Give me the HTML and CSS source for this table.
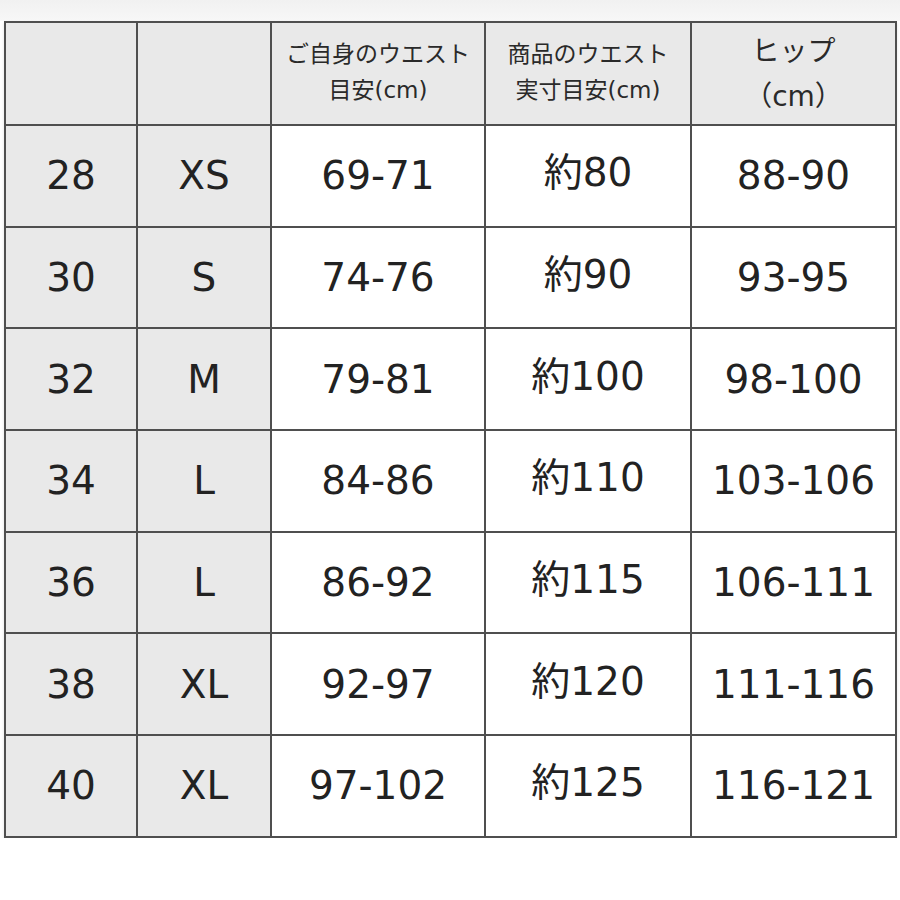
FILE: index.html
```html
<!DOCTYPE html>
<html lang="ja">
<head>
<meta charset="utf-8">
<title>サイズ表</title>
<link rel="stylesheet" href="styles.css">
</head>
<body>
<div class="topband"></div>
<table class="size">
  <colgroup>
    <col class="c1"><col class="c2"><col class="c3"><col class="c4"><col class="c5">
  </colgroup>
  <thead>
    <tr>
      <th class="g"></th>
      <th class="g"></th>
      <th class="h-small">ご自身のウエスト<br>目安(cm)</th>
      <th class="h-small">商品のウエスト<br>実寸目安(cm)</th>
      <th class="h-large">ヒップ<br>（cm）</th>
    </tr>
  </thead>
  <tbody>
    <tr><td class="g">28</td><td class="g">XS</td><td>69-71</td><td class="approx">約80</td><td>88-90</td></tr>
    <tr><td class="g">30</td><td class="g">S</td><td>74-76</td><td class="approx">約90</td><td>93-95</td></tr>
    <tr><td class="g">32</td><td class="g">M</td><td>79-81</td><td class="approx">約100</td><td>98-100</td></tr>
    <tr><td class="g">34</td><td class="g">L</td><td>84-86</td><td class="approx">約110</td><td>103-106</td></tr>
    <tr><td class="g">36</td><td class="g">L</td><td>86-92</td><td class="approx">約115</td><td>106-111</td></tr>
    <tr><td class="g">38</td><td class="g">XL</td><td>92-97</td><td class="approx">約120</td><td>111-116</td></tr>
    <tr><td class="g">40</td><td class="g">XL</td><td>97-102</td><td class="approx">約125</td><td>116-121</td></tr>
  </tbody>
</table>
</body>
</html>
```

FILE: styles.css
```css
html, body {
  margin: 0;
  padding: 0;
  background: #ffffff;
}

body {
  font-family: "DejaVu Sans", "Noto Sans CJK JP", sans-serif;
  color: #222222;
}

.topband {
  height: 21px;
  background: linear-gradient(#f1f1f1, #f7f7f7);
}

.size {
  border-collapse: collapse;
  table-layout: fixed;
  width: 891px;
  margin-left: 4px;
  box-shadow: 0 2px 3px rgba(0, 0, 0, 0.12);
}

.c1 { width: 132px; }
.c2 { width: 134px; }
.c3 { width: 214px; }
.c4 { width: 206px; }
.c5 { width: 205px; }

.size th,
.size td {
  border: 2px solid #4f4f4f;
  padding: 0;
  text-align: center;
  vertical-align: middle;
}

.size thead th {
  height: 101px;
  background: #e9e9e9;
  font-weight: normal;
  color: #2a2a2a;
}

.size td {
  height: 99.7px;
  font-size: 39px;
  line-height: 1;
  background: #ffffff;
}

.size .g {
  background: #e9e9e9;
}

.size td.approx {
  height: 93.7px;
  padding-bottom: 6px;
}

.size thead th.h-small {
  font-size: 23px;
  line-height: 36px;
  height: 97px;
  padding-bottom: 4px;
}

.size thead th.h-large {
  font-size: 28px;
  line-height: 45px;
}
```
